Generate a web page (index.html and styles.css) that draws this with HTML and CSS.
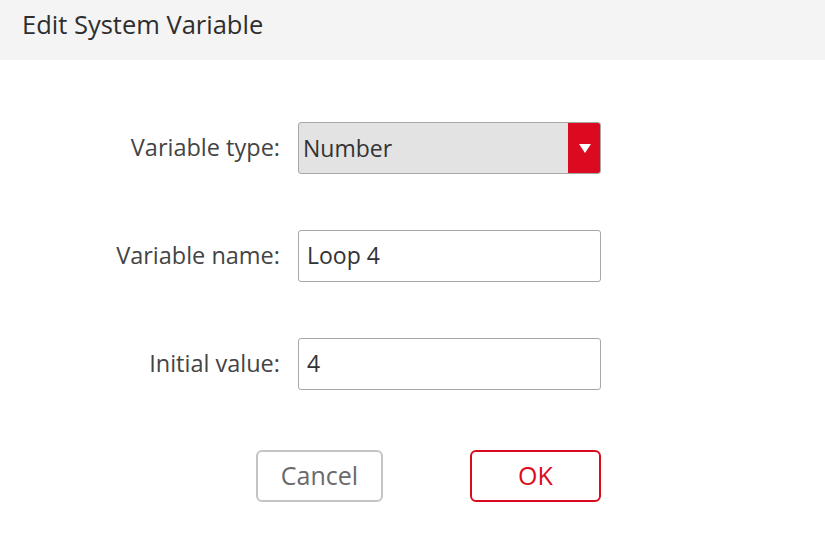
FILE: index.html
```html
<!DOCTYPE html>
<html>
<head>
<meta charset="utf-8">
<link rel="stylesheet" href="styles.css">
</head>
<body>
<div class="dialog">
  <div class="header">Edit System Variable</div>
  <div class="form">
    <label class="label">Variable type:</label>
    <div class="select">
      <span class="select-text">Number</span>
      <span class="select-btn"><svg width="12" height="9" viewBox="0 0 12 9"><path d="M0 0H12L6 9Z" fill="#fff"/></svg></span>
    </div>
    <label class="label">Variable name:</label>
    <div class="input">Loop 4</div>
    <label class="label">Initial value:</label>
    <div class="input">4</div>
  </div>
  <div class="buttons">
    <button class="btn cancel">Cancel</button>
    <button class="btn ok">OK</button>
  </div>
</div>
</body>
</html>
```
FILE: styles.css
```css
html, body {
  margin: 0;
  padding: 0;
  background: #fff;
}
body {
  font-family: "Open Sans", "Noto Sans", sans-serif;
  color: #333;
  width: 825px;
  height: 541px;
}
.header {
  height: 60px;
  background: #f4f4f4;
  box-sizing: border-box;
  padding: 7px 0 0 22px;
  font-size: 25.5px;
  color: #2e2e2e;
}
.form {
  display: grid;
  grid-template-columns: 280px 303px;
  column-gap: 18px;
  row-gap: 56px;
  margin-top: 62px;
  align-items: center;
}
.label {
  text-align: right;
  font-size: 23.5px;
  color: #444;
  padding-bottom: 3px;
}
.select, .input {
  height: 52px;
  box-sizing: border-box;
  border: 1px solid #a8a8a8;
  border-radius: 3px;
  font-size: 23px;
  color: #333;
}
.select {
  display: flex;
  background: #e3e3e3;
  overflow: hidden;
}
.select-text {
  flex: 1;
  display: flex;
  align-items: center;
  padding-left: 4px;
}
.select-btn {
  width: 33px;
  background: #dc0a20;
  display: flex;
  align-items: center;
  justify-content: center;
  margin: -1px -1px -1px 0;
}
.input {
  display: flex;
  align-items: center;
  padding: 0 0 2px 8px;
  background: #fff;
}
.buttons {
  display: flex;
  margin-top: 60px;
  padding-left: 256px;
  gap: 87px;
}
.btn {
  height: 52px;
  border-radius: 6px;
  background: #fff;
  font-family: inherit;
  font-size: 25px;
  box-sizing: border-box;
  padding: 0 0 3px;
}
.cancel {
  width: 127px;
  border: 2px solid #c4c4c4;
  color: #6a6a6a;
}
.ok {
  width: 131px;
  border: 2px solid #dc0a20;
  color: #dc0a20;
}
```
